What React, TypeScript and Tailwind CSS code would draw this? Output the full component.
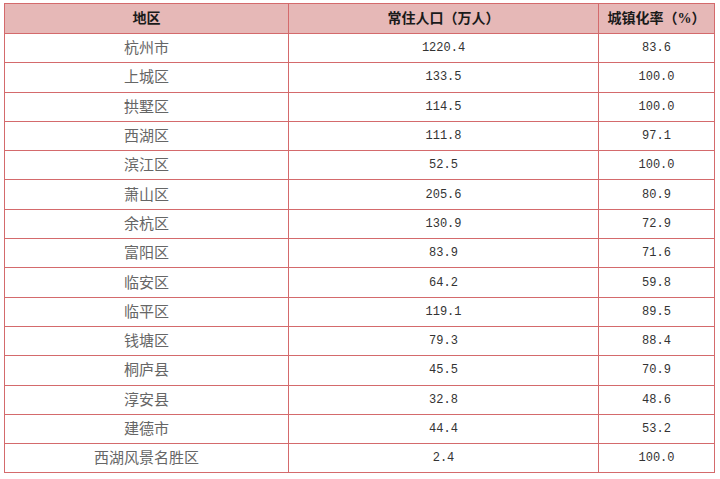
import React from "react";

const rows: [string, string, string][] = [
  ["杭州市", "1220.4", "83.6"],
  ["上城区", "133.5", "100.0"],
  ["拱墅区", "114.5", "100.0"],
  ["西湖区", "111.8", "97.1"],
  ["滨江区", "52.5", "100.0"],
  ["萧山区", "205.6", "80.9"],
  ["余杭区", "130.9", "72.9"],
  ["富阳区", "83.9", "71.6"],
  ["临安区", "64.2", "59.8"],
  ["临平区", "119.1", "89.5"],
  ["钱塘区", "79.3", "88.4"],
  ["桐庐县", "45.5", "70.9"],
  ["淳安县", "32.8", "48.6"],
  ["建德市", "44.4", "53.2"],
  ["西湖风景名胜区", "2.4", "100.0"],
];

const cjk = "font-['Liberation_Serif','Noto_Sans_CJK_SC',serif]";
const mono = "font-['Liberation_Mono','Noto_Sans_CJK_SC',monospace]";

export default function App() {
  return (
    <div className="w-[720px] h-[479px] bg-white pl-[4px] pt-[3px]">
      <table className="w-[710px] table-fixed border-collapse border-[1.5px] border-[#d46a6c]">
        <colgroup>
          <col className="w-[284px]" />
          <col className="w-[310px]" />
          <col className="w-[116px]" />
        </colgroup>
        <thead>
          <tr className="h-[30px] bg-[#e6b8b7]">
            {["地区", "常住人口（万人）", "城镇化率（%）"].map((h) => (
              <th
                key={h}
                className={`border-[1.5px] border-[#d46a6c] text-center text-[14px] font-bold text-[#1a1a1a] ${cjk}`}
              >
                {h}
              </th>
            ))}
          </tr>
        </thead>
        <tbody>
          {rows.map(([name, pop, rate]) => (
            <tr key={name} className="h-[29.3px]">
              <td className={`border-[1.5px] border-[#d46a6c] p-0 text-center text-[15px] leading-[20px] text-[#666] ${cjk}`}>
                {name}
              </td>
              <td className={`border-[1.5px] border-[#d46a6c] p-0 text-center text-[12px] leading-[20px] text-[#333] ${mono}`}>
                {pop}
              </td>
              <td className={`border-[1.5px] border-[#d46a6c] p-0 text-center text-[12px] leading-[20px] text-[#333] ${mono}`}>
                {rate}
              </td>
            </tr>
          ))}
        </tbody>
      </table>
    </div>
  );
}
